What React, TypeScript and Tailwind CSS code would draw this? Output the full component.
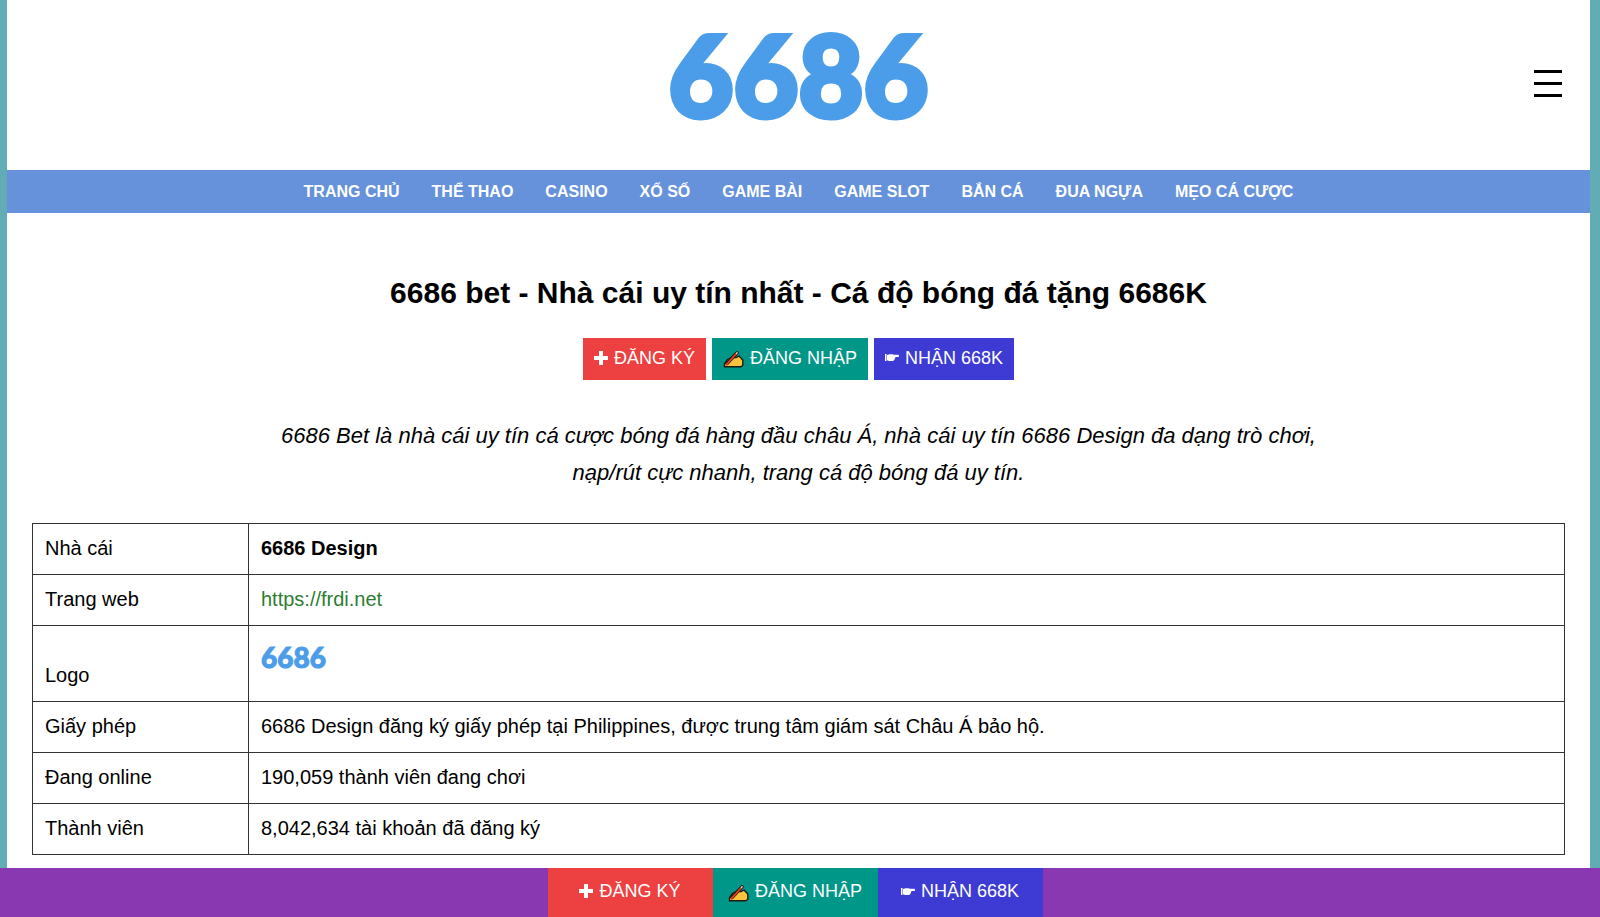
import type { ReactNode } from "react";

const navItems = [
  "TRANG CHỦ",
  "THỂ THAO",
  "CASINO",
  "XỔ SỐ",
  "GAME BÀI",
  "GAME SLOT",
  "BẮN CÁ",
  "ĐUA NGỰA",
  "MẸO CÁ CƯỢC",
];

function Plus() {
  return (
    <svg width="14" height="14" viewBox="0 0 14 14" fill="currentColor" aria-hidden="true">
      <path d="M5 0h4v5h5v4H9v5H5V9H0V5h5z" />
    </svg>
  );
}

function WritingHand() {
  return (
    <svg width="21" height="17" viewBox="0 0 21 17" className="mt-1" aria-hidden="true">
      <path
        d="M1.500 15.800v-2.800l3-4.500L8 6.500h5.500L16 5l3.800 4v5.200l-2 1.600z"
        fill="#fcc43c"
        stroke="#1d1a12"
        strokeWidth="1.400"
        strokeLinejoin="round"
      />
      <path d="M4 12.500L14 1.800" stroke="#1d1a12" strokeWidth="3.400" strokeLinecap="round" />
      <path d="M3.500 13.500L13.500 2.500" stroke="#f0401c" strokeWidth="1.800" strokeLinecap="round" />
      <path d="M13.500 2.400l.6-.6" stroke="#d8d8d8" strokeWidth="1.400" strokeLinecap="round" />
    </svg>
  );
}

function PointingHand() {
  return (
    <svg width="14" height="9" viewBox="0 0 14 9" fill="currentColor" aria-hidden="true">
      <path d="M0 1h1.500v7H0z" />
      <path d="M2 2l2.500-.8h3.500l.5.6H13c1.300 0 1.300 2.200 0 2.200H10.300c.3.8 0 1.400-.5 1.600.1.800-.2 1.400-.8 1.500-.1.700-.6.900-1.200.9H4L2 7.200z" />
    </svg>
  );
}

const actions: { label: string; color: string; icon: ReactNode }[] = [
  { label: "ĐĂNG KÝ", color: "bg-[#ed4040]", icon: <Plus /> },
  { label: "ĐĂNG NHẬP", color: "bg-[#009688]", icon: <WritingHand /> },
  { label: "NHẬN 668K", color: "bg-[#3d3bd3]", icon: <PointingHand /> },
];

const rows: { label: string; value: ReactNode }[] = [
  { label: "Nhà cái", value: <strong>6686 Design</strong> },
  {
    label: "Trang web",
    value: (
      <a href="#" className="text-[#2e7d32]">
        https://frdi.net
      </a>
    ),
  },
  {
    label: "Logo",
    value: (
      <span className="block pt-2 pb-[19px] font-[Lato] text-[28px] leading-6 font-black text-[#4b9dea] [-webkit-text-stroke:1px_#4b9dea]">
        6686
      </span>
    ),
  },
  {
    label: "Giấy phép",
    value: "6686 Design đăng ký giấy phép tại Philippines, được trung tâm giám sát Châu Á bảo hộ.",
  },
  { label: "Đang online", value: "190,059 thành viên đang chơi" },
  { label: "Thành viên", value: "8,042,634 tài khoản đã đăng ký" },
];

export default function App() {
  return (
    <div className="min-h-screen border-r-10 border-l-7 border-[#62adb5] bg-white pb-16 font-['Liberation_Sans',Arial,sans-serif] text-black">
      <header className="relative flex h-[170px] justify-center pt-4">
        <a
          href="#"
          className="font-[Lato] text-[112px] leading-[116px] font-black text-[#4b9dea] [-webkit-text-stroke:5px_#4b9dea]"
        >
          6686
        </a>
        <button type="button" aria-label="Menu" className="absolute top-[70px] right-7 flex flex-col gap-[9px]">
          <span className="h-[3px] w-7 bg-black" />
          <span className="h-[3px] w-7 bg-black" />
          <span className="h-[3px] w-7 bg-black" />
        </button>
      </header>

      <nav className="flex h-[43px] items-center justify-center bg-[#6592db]">
        {navItems.map((item) => (
          <a key={item} href="#" className="px-4 text-base font-bold text-white">
            {item}
          </a>
        ))}
      </nav>

      <main className="px-[25px] pt-[60px]">
        <h1 className="text-center text-[30px] leading-10 font-bold">
          6686 bet - Nhà cái uy tín nhất - Cá độ bóng đá tặng 6686K
        </h1>

        <div className="mt-[25px] flex justify-center gap-1.5">
          {actions.map((a) => (
            <a
              key={a.label}
              href="#"
              className={`flex h-[42px] items-center gap-1.5 px-[11px] pb-[3px] text-lg text-white ${a.color}`}
            >
              {a.icon}
              {a.label}
            </a>
          ))}
        </div>

        <p className="mx-auto mt-[37px] max-w-[1060px] text-center text-[22px] leading-[37px] italic">
          6686 Bet là nhà cái uy tín cá cược bóng đá hàng đầu châu Á, nhà cái uy tín 6686 Design đa dạng trò chơi,
          nạp/rút cực nhanh, trang cá độ bóng đá uy tín.
        </p>

        <table className="mt-8 w-full border-collapse border border-black text-[20px] leading-[26px]">
          <tbody>
            {rows.map((r) => (
              <tr key={r.label}>
                <th
                  scope="row"
                  className="w-[216px] border border-[#333] px-3 pt-[11px] pb-[13px] text-left align-bottom font-normal"
                >
                  {r.label}
                </th>
                <td className="border border-[#333] px-3 pt-[11px] pb-[13px]">{r.value}</td>
              </tr>
            ))}
          </tbody>
        </table>
      </main>

      <footer className="fixed inset-x-0 bottom-0 flex h-[49px] justify-center bg-[#8a38b2] pr-[10px]">
        {actions.map((a) => (
          <a
            key={a.label}
            href="#"
            className={`flex w-[165px] items-center justify-center gap-1.5 pb-[3px] text-lg text-white ${a.color}`}
          >
            {a.icon}
            {a.label}
          </a>
        ))}
      </footer>
    </div>
  );
}
